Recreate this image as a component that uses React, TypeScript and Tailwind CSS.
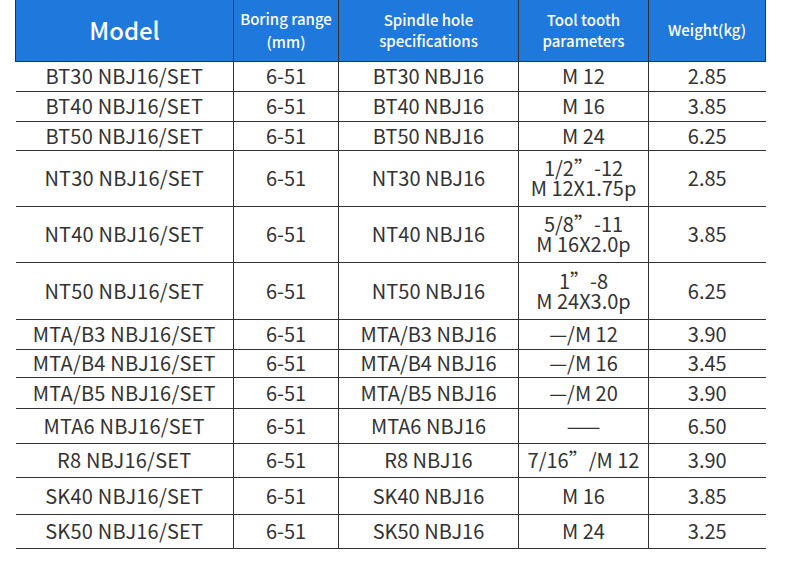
import React from 'react';

type Row = {
  model: string;
  range: string;
  spindle: string;
  tooth: string[];
  weight: string;
  h: string;
};

const rows: Row[] = [
  { model: 'BT30 NBJ16/SET', range: '6-51', spindle: 'BT30 NBJ16', tooth: ['M 12'], weight: '2.85', h: 'h-[30px]' },
  { model: 'BT40 NBJ16/SET', range: '6-51', spindle: 'BT40 NBJ16', tooth: ['M 16'], weight: '3.85', h: 'h-[30px]' },
  { model: 'BT50 NBJ16/SET', range: '6-51', spindle: 'BT50 NBJ16', tooth: ['M 24'], weight: '6.25', h: 'h-[29px]' },
  { model: 'NT30 NBJ16/SET', range: '6-51', spindle: 'NT30 NBJ16', tooth: ['1/2”-12', 'M 12X1.75p'], weight: '2.85', h: 'h-[56px]' },
  { model: 'NT40 NBJ16/SET', range: '6-51', spindle: 'NT40 NBJ16', tooth: ['5/8”-11', 'M 16X2.0p'], weight: '3.85', h: 'h-[56px]' },
  { model: 'NT50 NBJ16/SET', range: '6-51', spindle: 'NT50 NBJ16', tooth: ['1”-8', 'M 24X3.0p'], weight: '6.25', h: 'h-[57px]' },
  { model: 'MTA/B3 NBJ16/SET', range: '6-51', spindle: 'MTA/B3 NBJ16', tooth: ['—/M 12'], weight: '3.90', h: 'h-[30px]' },
  { model: 'MTA/B4 NBJ16/SET', range: '6-51', spindle: 'MTA/B4 NBJ16', tooth: ['—/M 16'], weight: '3.45', h: 'h-[28px]' },
  { model: 'MTA/B5 NBJ16/SET', range: '6-51', spindle: 'MTA/B5 NBJ16', tooth: ['—/M 20'], weight: '3.90', h: 'h-[31px]' },
  { model: 'MTA6 NBJ16/SET', range: '6-51', spindle: 'MTA6 NBJ16', tooth: ['——'], weight: '6.50', h: 'h-[35px]' },
  { model: 'R8 NBJ16/SET', range: '6-51', spindle: 'R8 NBJ16', tooth: ['7/16”/M 12'], weight: '3.90', h: 'h-[34px]' },
  { model: 'SK40 NBJ16/SET', range: '6-51', spindle: 'SK40 NBJ16', tooth: ['M 16'], weight: '3.85', h: 'h-[37px]' },
  { model: 'SK50 NBJ16/SET', range: '6-51', spindle: 'SK50 NBJ16', tooth: ['M 24'], weight: '3.25', h: 'h-[34px]' },
];

const font = { fontFamily: '"Noto Sans CJK SC", "Noto Sans", sans-serif' };

export default function App() {
  return (
    <div className="w-[790px] h-[564px] bg-white overflow-hidden" style={font}>
      <table className="ml-[15px] w-[750px] border-collapse table-fixed text-[#333]">
        <colgroup>
          <col className="w-[218px]" />
          <col className="w-[105px]" />
          <col className="w-[180px]" />
          <col className="w-[130px]" />
          <col className="w-[117px]" />
        </colgroup>
        <thead>
          <tr className="h-[61px] bg-[#1f79dd] text-white">
            <th className="border-l border-r border-b border-[#333] text-[24px] font-medium">Model</th>
            <th className="border-r border-b border-[#333] text-[15px] leading-[23px] font-medium">
              Boring range
              <br />
              (mm)
            </th>
            <th className="border-r border-b border-[#333] text-[15px] leading-[21px] font-medium">
              Spindle hole
              <br />
              specifications
            </th>
            <th className="border-r border-b border-[#333] text-[15px] leading-[21px] font-medium">
              Tool tooth
              <br />
              parameters
            </th>
            <th className="border-r border-b border-[#333] text-[15px] font-medium">Weight(kg)</th>
          </tr>
        </thead>
        <tbody className="text-[20px] text-center">
          {rows.map((r) => (
            <tr key={r.model} className={`${r.h} border-b border-[#333]`}>
              <td className="border-r border-[#333] p-0 leading-[22px] tracking-[0.2px]">{r.model}</td>
              <td className="border-r border-[#333] p-0 leading-[22px]">{r.range}</td>
              <td className="border-r border-[#333] p-0 leading-[22px]">{r.spindle}</td>
              <td className="border-r border-[#333] p-0 leading-[20px]">
                {r.tooth.map((t) => (
                  <div key={t}>{t}</div>
                ))}
              </td>
              <td className="p-0 leading-[22px]">{r.weight}</td>
            </tr>
          ))}
        </tbody>
      </table>
    </div>
  );
}
